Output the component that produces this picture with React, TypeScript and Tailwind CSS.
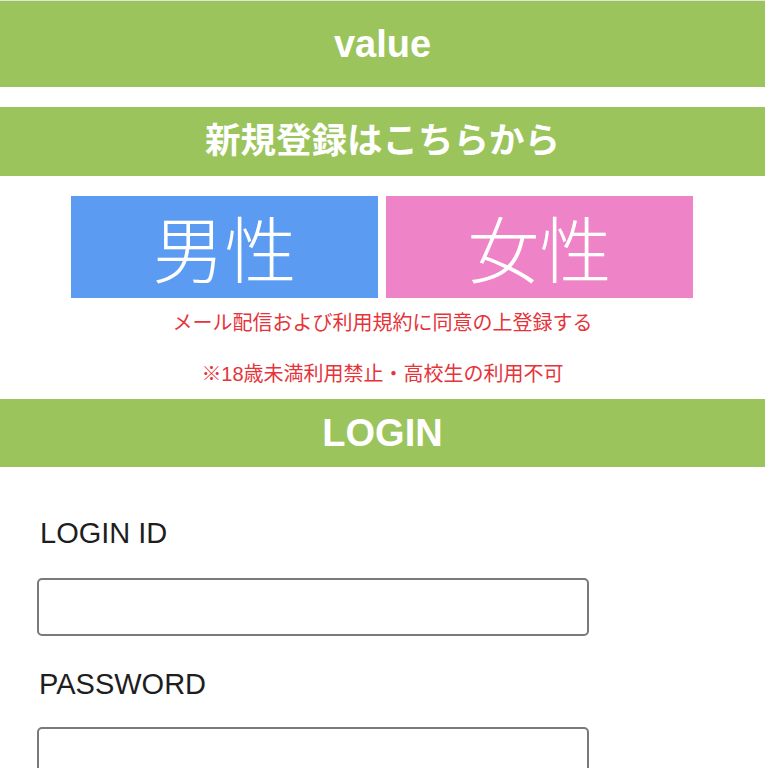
import React from 'react';

const FONT = "font-['Liberation_Sans','Noto_Sans_CJK_JP',sans-serif]";

const GreenBar: React.FC<{ className: string; children: React.ReactNode }> = ({ className, children }) => (
  <div className={`flex items-center justify-center bg-[#9bc55c] font-bold text-white ${className}`}>
    {children}
  </div>
);

export default function App() {
  return (
    <div className={`${FONT} w-[765px] min-h-[768px] bg-white border-t border-[#dfe8d2]`}>
      {/* header */}
      <GreenBar className="h-[86px] text-[38px]">value</GreenBar>

      {/* signup */}
      <GreenBar className="mt-[20px] h-[69px] text-[35.5px]">新規登録はこちらから</GreenBar>

      <div className="mt-[20px] flex justify-center gap-[8px] pr-[1px]">
        <a className="flex h-[102px] w-[307px] items-center justify-center bg-[#5b9cf2] pt-[9px] text-[72px] font-light leading-none text-white">
          男性
        </a>
        <a className="flex h-[102px] w-[307px] items-center justify-center bg-[#ee83c7] pt-[9px] text-[72px] font-light leading-none text-white">
          女性
        </a>
      </div>

      <p className="mt-[10px] text-center text-[20px] leading-[30px] text-[#e5343a]">
        メール配信および利用規約に同意の上登録する
      </p>
      <p className="mt-[21px] text-center text-[20px] leading-[30px] text-[#e5343a]">
        ※18歳未満利用禁止・高校生の利用不可
      </p>

      {/* login */}
      <GreenBar className="mt-[10px] h-[68px] text-[38px]">LOGIN</GreenBar>

      <div className="px-[37px]">
        <label className="mt-[49px] block pl-[3px] text-[29px] leading-[34px] text-[#1e1e1e]">LOGIN ID</label>
        <input
          type="text"
          className="mt-[28px] block h-[58px] w-[552px] rounded-[5px] border-2 border-[#7a7a7a] bg-white"
        />
        <label className="mt-[31px] block pl-[2px] text-[29px] leading-[34px] text-[#1e1e1e]">PASSWORD</label>
        <input
          type="password"
          className="mt-[26px] block h-[58px] w-[552px] rounded-[5px] border-2 border-[#7a7a7a] bg-white"
        />
      </div>
    </div>
  );
}
